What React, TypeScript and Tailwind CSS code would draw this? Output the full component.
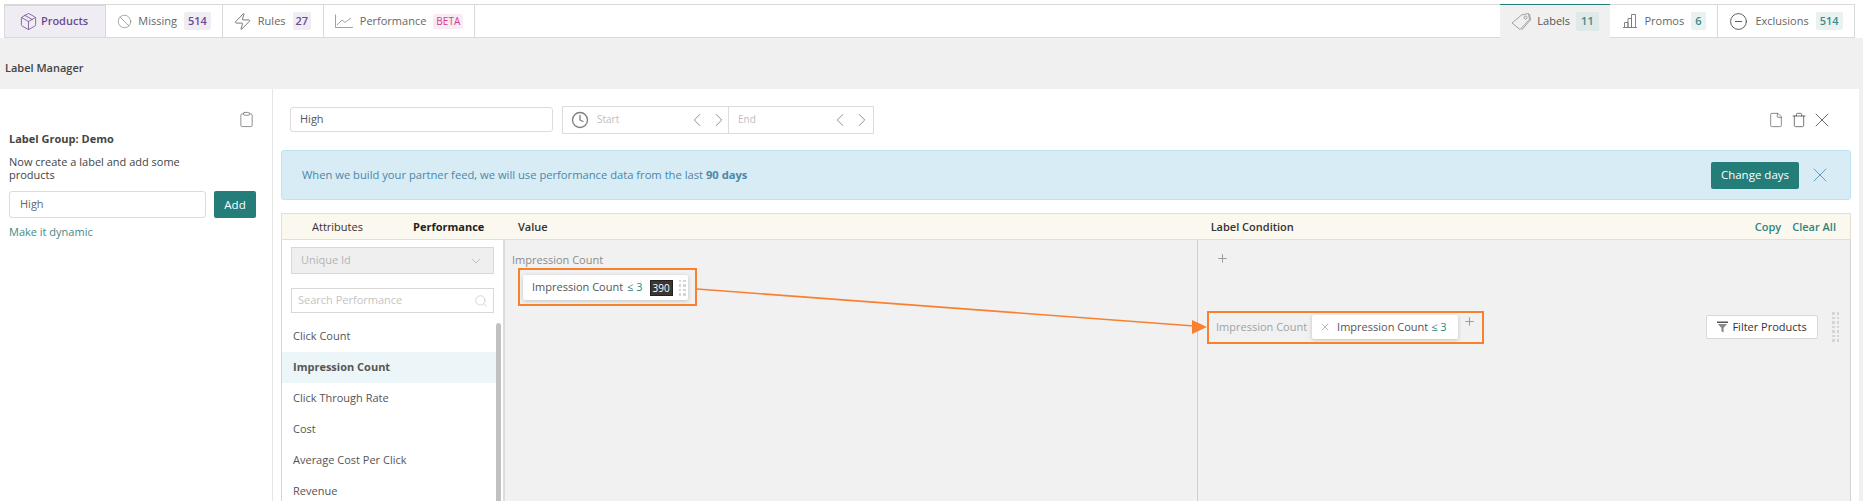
import { Ban, ChevronDown, ChevronLeft, ChevronRight, CircleMinus, Clipboard, Clock, File, Package, Plus, Search, Trash, X, Zap } from "lucide-react";
import type { ReactNode } from "react";

const font = "font-['Open_Sans',sans-serif]";

function LineIcon() {
  return (
    <svg width="18" height="14" viewBox="0 0 18 14" fill="none" stroke="#8a8a8a" strokeWidth="0.8">
      <path d="M0.5 0.5V13.5H18" />
      <path d="M2 11L7 6L10 8.5L16 4" />
    </svg>
  );
}

function BarsIcon() {
  return (
    <svg width="14" height="14" viewBox="0 0 14 14" fill="none" stroke="#777" strokeWidth="0.9">
      <path d="M0 13.5H14M1.5 13.5V8.5H5V13.5M5 13.5V4.5H8.5V13.5M8.5 13.5V0.5H12.5V13.5" />
    </svg>
  );
}

function TagIcon() {
  return (
    <svg width="20" height="19" viewBox="0 0 20 19" fill="none" stroke="#999" strokeWidth="0.9">
      <path d="M1 11L10.5 3L17.5 1.5L18.5 7.5L9 17.5Z" />
      <circle cx="14.5" cy="5.5" r="1.5" />
      <path d="M18.5 2L19.5 8L10.5 18" />
    </svg>
  );
}

function FunnelIcon() {
  return (
    <svg width="11" height="12" viewBox="0 0 11 12">
      <path d="M0 0.5H11V2H0Z" fill="#555" />
      <path d="M1 3H10L6.6 7V11.5L4.4 10.2V7Z" fill="#8a8a8a" />
    </svg>
  );
}

function Grip({ rows }: { rows: number }) {
  return (
    <div className="grid grid-cols-2 gap-x-[2px] gap-y-[2px]">
      {Array.from({ length: rows * 2 }).map((_, i) => (
        <span key={i} className="h-[2.5px] w-[2.5px] bg-[#d5d5d5]" />
      ))}
    </div>
  );
}

function NavTab(props: { icon: ReactNode; label: string; badge?: string; width: string; badgeClass?: string; active?: boolean }) {
  return (
    <div
      className={`flex h-[33px] items-center justify-center gap-[6px] border-r border-b border-[#d9d9d9] ${props.width} ${
        props.active ? "border-[#5b3a82] border-l border-t bg-[#f0ecf4] text-[#6b4a8e] font-semibold" : "text-[#666]"
      }`}
    >
      {props.icon}
      <span className={props.active ? "-ml-[3px]" : ""}>{props.label}</span>
      {props.badge && <span className={`ml-[1px] rounded-[2px] py-[1px] font-semibold ${props.badgeClass}`}>{props.badge}</span>}
    </div>
  );
}

function Topbar() {
  return (
    <div className="flex h-[38px] bg-white pt-[4px] pl-[4px] pr-[8px]">
      <div className="flex flex-1 border-t border-[#d9d9d9]">
        <NavTab active width="w-[102px] pr-[3px]" label="Products" icon={<Package size={19} strokeWidth={1} color="#6b4a8e" />} />
        <NavTab width="w-[117px]" label="Missing" badge="514" badgeClass="bg-[#f0ecf4] text-[#6b4a8e] px-[4px]" icon={<Ban size={15} strokeWidth={1} color="#777" />} />
        <NavTab width="w-[101px] pr-[2px]" label="Rules" badge="27" badgeClass="bg-[#f0ecf4] text-[#6b4a8e] px-[3px]" icon={<Zap size={19} strokeWidth={1} color="#555" />} />
        <div className="flex h-[33px] w-[151px] items-center justify-center gap-[7px] border-r border-b border-[#d9d9d9] text-[#666]">
          <LineIcon />
          <span>Performance</span>
          <span className="rounded-[2px] bg-[#f9ebf3] px-[3px] text-[10px] text-[#d0408f]">BETA</span>
        </div>
        <div className="flex-1 border-b border-[#d9d9d9]" />
        <div className="-mt-px flex h-[34px] w-[110px] items-center justify-center gap-[6px] border-t border-[#26807a] bg-[#f0f0f0] text-[#555]">
          <TagIcon />
          <span>Labels</span>
          <span className="rounded-[2px] bg-[#dfe9e8] px-[5px] py-[1px] font-semibold text-[#3f8a86]">11</span>
        </div>
        <div className="flex h-[33px] w-[108px] items-center justify-center gap-[7px] border-r border-b border-[#d9d9d9] pl-[2px] text-[#666]">
          <BarsIcon />
          <span>Promos</span>
          <span className="rounded-[2px] bg-[#e9f2f1] px-[4px] py-[1px] font-semibold text-[#3f8a86]">6</span>
        </div>
        <div className="flex h-[33px] w-[137px] items-center justify-center gap-[7px] border-r border-b border-[#d9d9d9] text-[#666]">
          <CircleMinus size={19} strokeWidth={1} color="#333" />
          <span>Exclusions</span>
          <span className="rounded-[2px] bg-[#e9f2f1] px-[4px] py-[1px] font-semibold text-[#3f8a86]">514</span>
        </div>
      </div>
    </div>
  );
}

function LeftPanel() {
  return (
    <aside className="w-[273px] shrink-0 border-r border-[#e4e4e4] bg-white pl-[9px] pr-[16px] pt-[22px] text-[#444]">
      <div className="flex justify-end pr-px">
        <Clipboard size={17} strokeWidth={1} color="#666" />
      </div>
      <div className="mt-[3px] font-bold leading-[15px]">Label Group: Demo</div>
      <p className="mt-[9px] w-[200px] leading-[13px]">Now create a label and add some products</p>
      <div className="mt-[10px] flex gap-[8px]">
        <div className="flex h-[27px] w-[197px] shrink-0 items-center rounded-[3px] border border-[#dcdcdc] px-[10px] text-[#666]">High</div>
        <button className="h-[27px] w-[42px] rounded-[2px] bg-[#247d78] text-[11.5px] text-white">Add</button>
      </div>
      <div className="mt-[6px] text-[#3f8a86]">Make it dynamic</div>
    </aside>
  );
}

function Toolbar() {
  return (
    <div className="flex h-[61px] items-center pl-[17px] pr-[25px]">
      <div className="flex h-[25px] w-[263px] items-center rounded-[3px] border border-[#dcdcdc] px-[9px] text-[#555]">High</div>
      <div className="ml-[9px] flex h-[28px] w-[312px] items-center border border-[#dcdcdc] text-[10px] text-[#c0c0c0]">
        <div className="flex h-full w-[166px] items-center border-r border-[#dcdcdc] pl-[8px]">
          <Clock size={18} strokeWidth={1.8} color="#808080" />
          <span className="ml-[8px] flex-1">Start</span>
          <ChevronLeft size={22} strokeWidth={0.9} color="#777" />
          <ChevronRight size={22} strokeWidth={0.9} color="#777" className="-mr-[2px]" />
        </div>
        <div className="flex h-full flex-1 items-center pl-[9px]">
          <span className="flex-1">End</span>
          <ChevronLeft size={22} strokeWidth={0.9} color="#777" />
          <ChevronRight size={22} strokeWidth={0.9} color="#777" />
        </div>
      </div>
      <div className="ml-auto flex items-center">
        <File size={16} strokeWidth={1} color="#555" />
        <Trash size={16} strokeWidth={1} color="#333" className="ml-[7px]" />
        <X size={24} strokeWidth={0.8} color="#444" className="ml-[3px]" />
      </div>
    </div>
  );
}

function Alert() {
  return (
    <div className="mx-[8px] flex h-[50px] items-center rounded-[3px] border border-[#bce4ef] bg-[#d8ecf5] pl-[20px] pr-[18px] text-[#4b87a8]">
      <span className="text-[11.2px]">
        When we build your partner feed, we will use performance data from the last <b className="font-bold">90 days</b>
      </span>
      <button className="ml-auto h-[27px] w-[88px] rounded-[2px] bg-[#247d78] text-[11.5px] text-white">Change days</button>
      <X size={24} strokeWidth={0.8} color="#4b87a8" className="ml-[9px]" />
    </div>
  );
}

const attributes = ["Click Count", "Impression Count", "Click Through Rate", "Cost", "Average Cost Per Click", "Revenue"];

function AttributeList() {
  return (
    <div className="w-[223px] shrink-0 border-r-2 border-[#dcdcdc] bg-white">
      <div className="mx-[9px] mt-[7px] flex h-[27px] w-[203px] items-center justify-between border border-[#d8d8d8] bg-[#efefef] px-[9px] text-[#b4b4b4]">
        <span>Unique Id</span>
        <ChevronDown size={16} strokeWidth={1} color="#aaa" />
      </div>
      <div className="mx-[9px] mt-[14px] flex h-[25px] w-[203px] items-center justify-between border border-[#d8d8d8] pl-[6px] pr-[5px] text-[#c4c4c4]">
        <span>Search Performance</span>
        <Search size={14} strokeWidth={1} color="#bbb" />
      </div>
      <div className="relative mt-[8px] mr-[7px]">
        {attributes.map((name) => (
          <div key={name} className={`flex h-[31px] items-center pl-[11px] text-[#555] ${name === "Impression Count" ? "bg-[#ecf5f8] font-bold" : ""}`}>
            {name}
          </div>
        ))}
        <div className="absolute top-[2px] -right-[5px] bottom-0 w-[5px] rounded-t-[3px] bg-[#c1c1c1]" />
      </div>
    </div>
  );
}

function LabelTable() {
  return (
    <div className="mx-[8px] mt-[13px]">
      <div className="flex h-[27px] items-center border border-[#e5dfcf] bg-[#fbf8f0] pr-[14px] pt-px text-[#333]">
        <span className="ml-[30px] w-[101px]">Attributes</span>
        <b className="w-[105px] font-bold text-[#222]">Performance</b>
        <span className="font-semibold">Value</span>
        <span className="ml-[663px] font-semibold">Label Condition</span>
        <span className="ml-auto font-semibold text-[#2d8580]">Copy</span>
        <span className="ml-[11px] font-semibold text-[#2d8580]">Clear All</span>
      </div>
      <div className="flex h-[262px] border-x border-[#d4d4d4]">
        <AttributeList />
        <div className="w-[693px] shrink-0 border-r border-[#cfcfcf] bg-[#f1f1f1] pl-[7px] pt-[13px]">
          <div className="leading-[14px] text-[#8c8c8c]">Impression Count</div>
          <div className="ml-[11px] mt-[8px] flex h-[25px] w-[165px] items-center rounded-[2px] bg-white pl-[9px] text-[#555] shadow-[0_1px_4px_rgba(0,0,0,0.2)]">
            Impression Count <span className="ml-[4px] text-[#2d8580]">≤ 3</span>
            <span className="ml-[7px] w-[23px] border border-[#222] bg-[#3b3636] text-center text-[10px] leading-[14px] text-white">390</span>
            <span className="ml-[6px]"><Grip rows={4} /></span>
          </div>
        </div>
        <div className="flex-1 bg-[#f1f1f1] pl-[18px] pt-[12px]">
          <Plus size={13} strokeWidth={1.8} color="#999" />
          <div className="mt-[49px] flex h-[26px] items-center">
            <span className="text-[#a2a2a2]">Impression Count</span>
            <div className="ml-[5px] flex h-[24px] w-[146px] items-center rounded-[2px] bg-white pl-[7px] text-[#555] shadow-[0_1px_4px_rgba(0,0,0,0.2)]">
              <X size={12} strokeWidth={2} color="#bbb" />
              <span className="ml-[6px]">Impression Count</span>
              <span className="ml-[3px] text-[#2d8580]">≤ 3</span>
            </div>
            <Plus size={13} strokeWidth={1.8} color="#999" className="ml-[5px] -mt-[12px]" />
            <button className="ml-[230px] flex h-[24px] w-[112px] items-center justify-center gap-[4px] rounded-[2px] border border-[#d8d8d8] bg-white text-[#333]">
              <FunnelIcon />
              Filter Products
            </button>
            <span className="ml-[14px]"><Grip rows={7} /></span>
          </div>
        </div>
      </div>
    </div>
  );
}

// annotation layer: the orange call-outs and arrow sit over the table
function Callouts() {
  return (
    <>
      <div className="absolute left-[518px] top-[268px] h-[38px] w-[179px] border-2 border-[#f9802e]" />
      <div className="absolute left-[1207px] top-[311px] h-[33px] w-[277px] border-2 border-[#f9802e]" />
      <svg className="absolute left-0 top-0" width="1863" height="501" fill="none">
        <path d="M697 289L1194 326" stroke="#f9802e" strokeWidth="1.7" />
        <path d="M1207 327L1192 320L1192 334Z" fill="#f9802e" />
      </svg>
    </>
  );
}

export default function App() {
  return (
    <div className={`relative h-[501px] w-[1863px] overflow-hidden bg-[#f0f0f0] text-[11px] ${font}`}>
      <Topbar />
      <div className="flex h-[51px] items-center pl-[5px] pt-[9px] font-semibold text-[#444]">Label Manager</div>
      <div className="flex h-[412px] pr-[4px]">
        <LeftPanel />
        <main className="flex-1 bg-white">
          <Toolbar />
          <Alert />
          <LabelTable />
        </main>
      </div>
      <Callouts />
    </div>
  );
}
